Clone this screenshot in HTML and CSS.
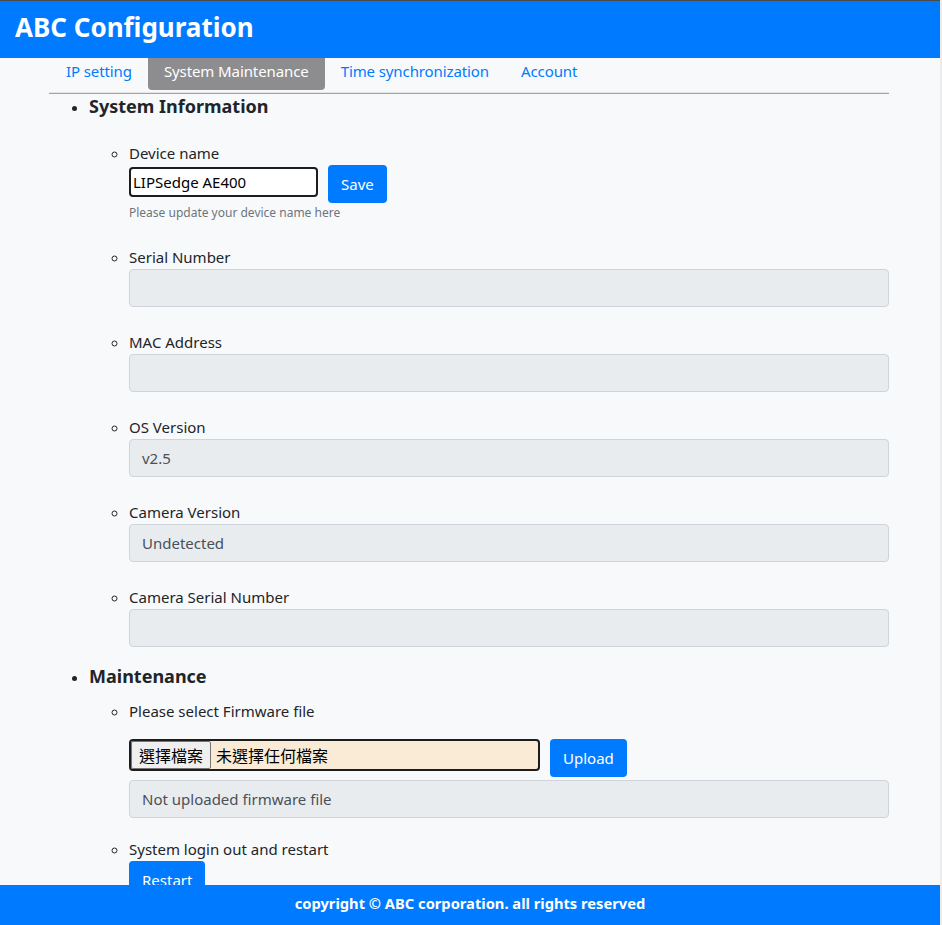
FILE: index.html
```html
<!DOCTYPE html>
<html lang="en">
<head>
<meta charset="utf-8">
<title>ABC Configuration</title>
<link rel="stylesheet" href="styles.css">
</head>
<body>
<div class="page">
  <header class="topbar">
    <h1 class="title">ABC Configuration</h1>
  </header>
  <main class="container">
    <nav class="tabs">
      <a class="tab">IP setting</a>
      <a class="tab active">System Maintenance</a>
      <a class="tab">Time synchronization</a>
      <a class="tab">Account</a>
    </nav>
    <ul class="sections">
      <li class="section">
        <h2 class="section-title">System Information</h2>
        <ul class="fields fields-info">
          <li class="field field-device">
            <label class="field-label">Device name</label>
            <div class="inline-row">
              <input class="name-input" type="text" value="LIPSedge AE400">
              <button class="btn">Save</button>
            </div>
            <small class="help">Please update your device name here</small>
          </li>
          <li class="field">
            <label class="field-label">Serial Number</label>
            <div class="readonly"></div>
          </li>
          <li class="field">
            <label class="field-label">MAC Address</label>
            <div class="readonly"></div>
          </li>
          <li class="field">
            <label class="field-label">OS Version</label>
            <div class="readonly">v2.5</div>
          </li>
          <li class="field">
            <label class="field-label">Camera Version</label>
            <div class="readonly">Undetected</div>
          </li>
          <li class="field">
            <label class="field-label">Camera Serial Number</label>
            <div class="readonly"></div>
          </li>
        </ul>
      </li>
      <li class="section">
        <h2 class="section-title">Maintenance</h2>
        <ul class="fields fields-maint">
          <li class="field field-upload">
            <label class="field-label">Please select Firmware file</label>
            <div class="inline-row upload-row">
              <div class="file-input"><span class="file-btn">選擇檔案</span><span class="file-name">未選擇任何檔案</span></div>
              <button class="btn">Upload</button>
            </div>
            <div class="readonly">Not uploaded firmware file</div>
          </li>
          <li class="field field-restart">
            <label class="field-label">System login out and restart</label>
            <div><button class="btn">Restart</button></div>
          </li>
        </ul>
      </li>
    </ul>
  </main>
  <footer class="footer">copyright © ABC corporation. all rights reserved</footer>
</div>
</body>
</html>
```
FILE: styles.css
```css
html {
  background: #ececec;
}
body {
  margin: 0;
  width: 940px;
  min-height: 100vh;
  background: #f8f9fa;
  border-top: 1px solid #4a4a4a;
  box-sizing: border-box;
  font-family: "Noto Sans", "Noto Sans CJK TC", sans-serif;
  font-size: 15px;
  line-height: 24px;
  color: #212529;
}
.topbar {
  background: #007bff;
  height: 57px;
  box-sizing: border-box;
  display: flex;
  align-items: center;
  padding: 0 0 4px 15px;
}
.title {
  margin: 0;
  color: #fff;
  font-size: 26px;
  font-weight: 700;
  line-height: 1.2;
}
.container {
  width: 840px;
  margin-left: 49px;
  padding-bottom: 60px;
}
.tabs {
  display: flex;
  padding-left: 1px;
  padding-bottom: 3px;
  border-bottom: 1px solid #a3a3a3;
  box-shadow: inset 0 -1px 0 #e6e6e6;
}
.tab {
  padding: 1px 16px 7px;
  color: #007bff;
  text-decoration: none;
  line-height: 24px;
  letter-spacing: -0.1px;
}
.tab.active {
  background: #8d8d8f;
  color: #fff;
  border-radius: 0 0 4px 4px;
}
.sections {
  margin: 0;
  padding-left: 40px;
  list-style: disc;
}
.section-title {
  margin: 0;
  font-size: 18px;
  font-weight: 700;
  line-height: 25px;
}
.fields {
  margin: 0;
  padding-left: 40px;
  list-style: circle;
}
.fields-info {
  padding-top: 22px;
  padding-bottom: 17px;
}
.fields-maint {
  padding-top: 10px;
}
.field {
  margin-bottom: 23px;
}
.fields-info .field:last-child {
  margin-bottom: 0;
}
.field-label {
  display: block;
  line-height: 24px;
}
.inline-row {
  display: flex;
  align-items: flex-start;
  gap: 10px;
}
.name-input {
  margin-top: 2px;
  width: 189px;
  height: 30px;
  box-sizing: border-box;
  border: 2px solid #1d1d1d;
  border-radius: 4px;
  padding: 0 2px;
  font: inherit;
  color: #000;
  background: #fff;
}
.btn {
  height: 38px;
  padding: 0 13px;
  border: none;
  border-radius: 4px;
  background: #007bff;
  color: #fff;
  font: inherit;
  line-height: 24px;
}
.help {
  display: block;
  margin-top: 1px;
  font-size: 12px;
  line-height: 18px;
  color: #6c757d;
}
.readonly {
  height: 38px;
  box-sizing: border-box;
  padding: 6px 12px;
  background: #e9ecef;
  border: 1px solid #ced4da;
  border-radius: 4px;
  color: #495057;
  line-height: 24px;
}
.field-device {
  margin-bottom: 23px;
}
.upload-row {
  margin-top: 16px;
  margin-bottom: 3px;
}
.file-input {
  width: 411px;
  height: 32px;
  box-sizing: border-box;
  border: 2px solid #1d1d1d;
  border-radius: 4px;
  background: #faebd7;
  display: flex;
  align-items: stretch;
  font-family: "Noto Sans CJK TC", sans-serif;
  font-size: 16px;
}
.file-btn {
  display: flex;
  align-items: center;
  padding: 0 7px;
  background: #efefef;
  border: 1px solid #767676;
  border-radius: 2px;
  color: #000;
}
.file-name {
  display: flex;
  align-items: center;
  padding-left: 5px;
  color: #000;
}
.field-upload {
  margin-bottom: 19px;
}
.footer {
  position: fixed;
  left: 0;
  right: 2px;
  bottom: 0;
  height: 40px;
  background: #007bff;
  color: #fff;
  font-size: 14.7px;
  font-weight: 700;
  text-align: center;
  line-height: 37px;
}
```
